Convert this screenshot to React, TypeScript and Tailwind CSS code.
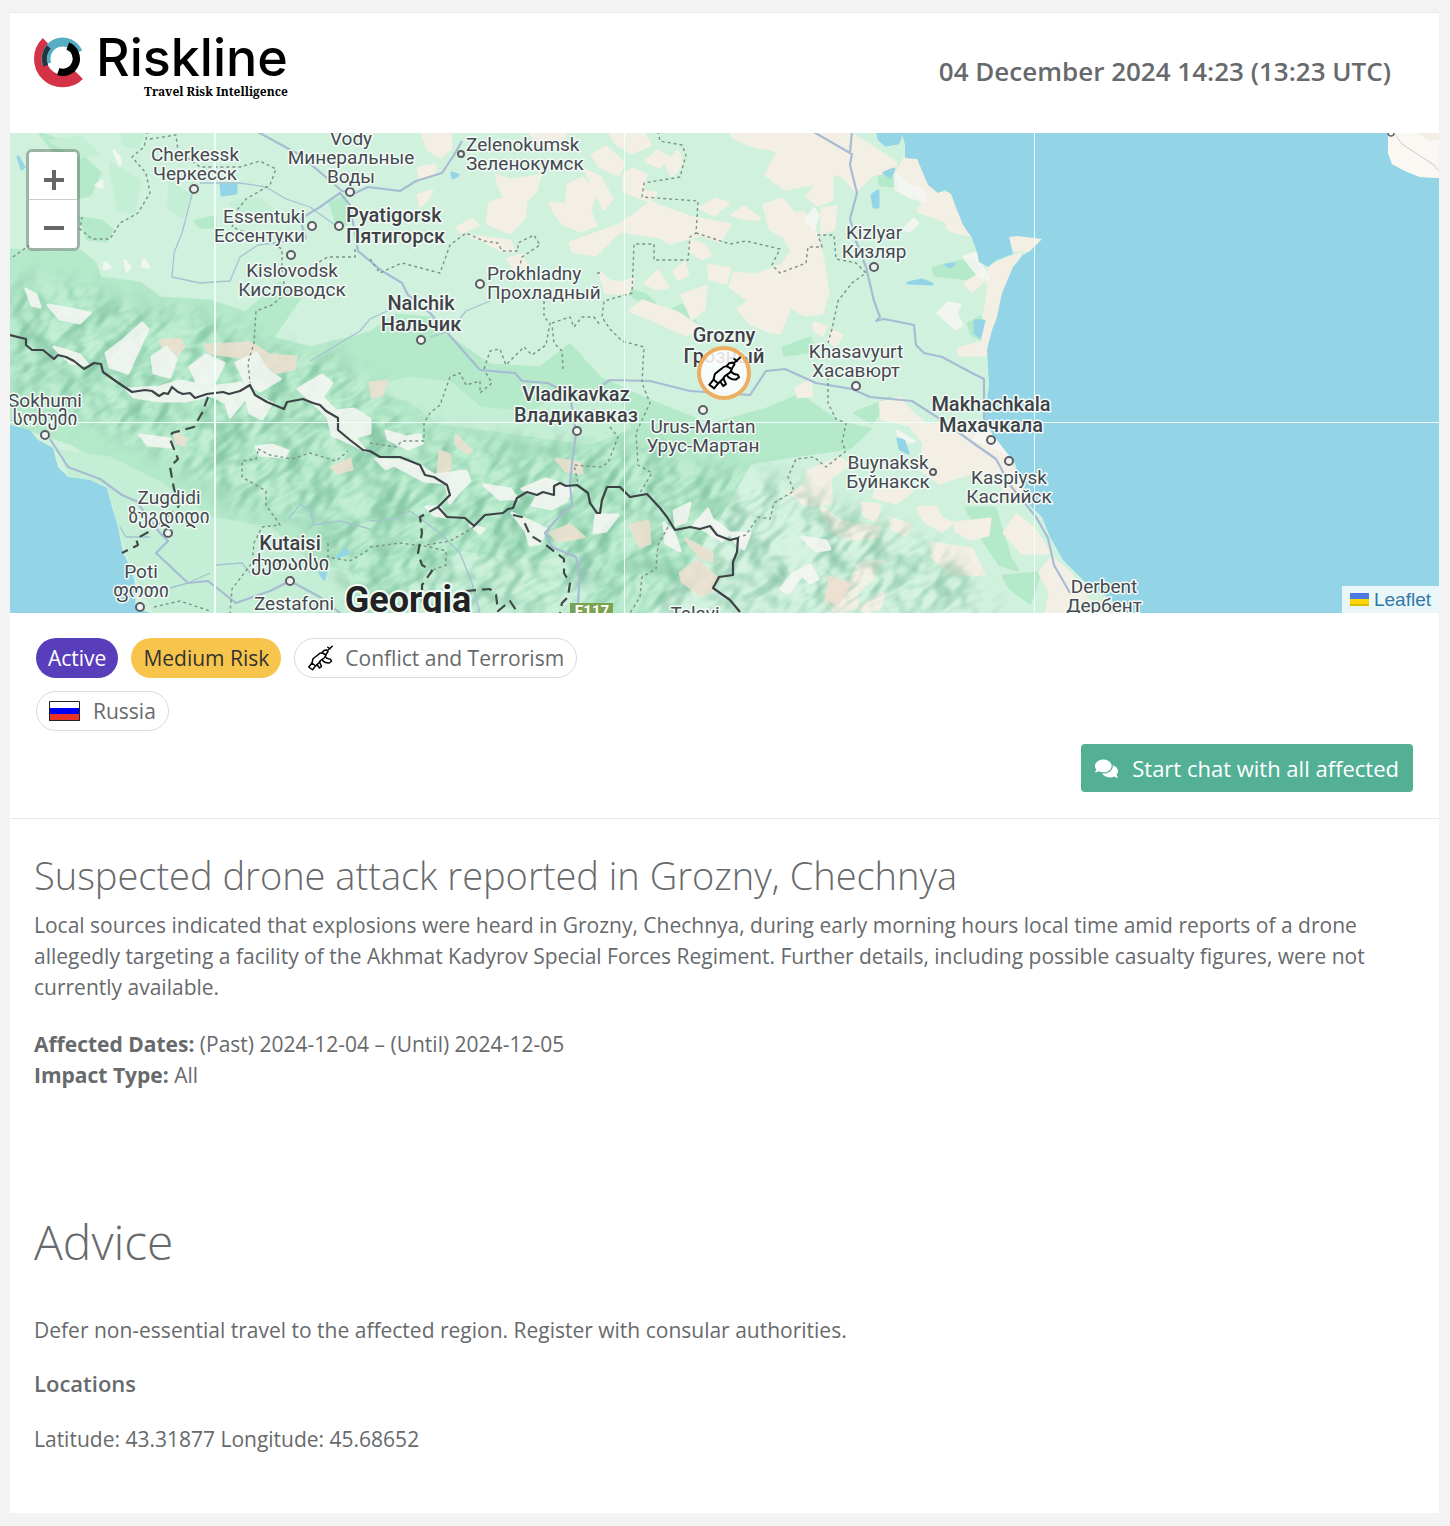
import { FaComments } from 'react-icons/fa';

type Anchor = 'start' | 'middle' | 'end';

interface Place {
  lines: [string, number][];
  x: number;
  anchor?: Anchor;
  major?: boolean;
  dot?: [number, number, number];
}

const places: Place[] = [
  { x: 185, lines: [['Cherkessk', 28], ['Черкесск', 47]], dot: [184, 56, 4] },
  { x: 341, lines: [['Vody', 12], ['Минеральные', 31], ['Воды', 50]], dot: [340, 59, 4] },
  { x: 456, anchor: 'start', lines: [['Zelenokumsk', 18], ['Зеленокумск', 37]], dot: [451, 21, 3] },
  { x: 295, anchor: 'end', lines: [['Essentuki', 90], ['Ессентуки', 109]], dot: [302, 93, 4] },
  { x: 336, anchor: 'start', major: true, lines: [['Pyatigorsk', 89], ['Пятигорск', 110]], dot: [329, 93, 4] },
  { x: 282, lines: [['Kislovodsk', 144], ['Кисловодск', 163]], dot: [281, 122, 4] },
  { x: 477, anchor: 'start', lines: [['Prokhladny', 147], ['Прохладный', 166]], dot: [470, 151, 4] },
  { x: 411, major: true, lines: [['Nalchik', 177], ['Нальчик', 198]], dot: [411, 207, 4] },
  { x: 864, lines: [['Kizlyar', 106], ['Кизляр', 125]], dot: [864, 134, 4] },
  { x: 714, major: true, lines: [['Grozny', 209], ['Грозный', 230]] },
  { x: 846, lines: [['Khasavyurt', 225], ['Хасавюрт', 244]], dot: [846, 253, 4] },
  { x: 35, lines: [['Sokhumi', 274], ['სოხუმი', 292]], dot: [35, 302, 4] },
  { x: 566, major: true, lines: [['Vladikavkaz', 268], ['Владикавказ', 289]], dot: [567, 298, 4] },
  { x: 693, lines: [['Urus-Martan', 300], ['Урус-Мартан', 319]], dot: [693, 277, 4] },
  { x: 981, major: true, lines: [['Makhachkala', 278], ['Махачкала', 299]], dot: [981, 307, 4] },
  { x: 878, lines: [['Buynaksk', 336], ['Буйнакск', 355]], dot: [923, 339, 3] },
  { x: 999, lines: [['Kaspiysk', 351], ['Каспийск', 370]], dot: [999, 328, 4] },
  { x: 159, lines: [['Zugdidi', 371], ['ზუგდიდი', 390]], dot: [158, 400, 4] },
  { x: 131, lines: [['Poti', 445], ['ფოთი', 464]], dot: [130, 474, 4] },
  { x: 280, major: true, lines: [['Kutaisi', 417], ['ქუთაისი', 437]], dot: [280, 448, 4] },
  { x: 284, lines: [['Zestafoni', 477]] },
  { x: 685, lines: [['Telavi', 487]] },
  { x: 1094, lines: [['Derbent', 460], ['Дербент', 479]] },
];

const forests = [
  'M0 117 L45 120 L70 118 L85 130 L90 145 L130 150 L150 165 L200 168 L235 180 L270 150 L290 165 L262 205 L300 215 L360 200 L385 182 L420 185 L440 205 L480 232 L530 235 L560 212 L590 245 L640 268 L700 292 L760 275 L790 262 L830 290 L860 296 L840 315 L790 322 L740 330 L700 400 L640 480 L330 480 L290 420 L240 440 L205 400 L130 350 L60 310 L0 290 Z',
  'M30 0 L60 12 L90 40 L80 62 L60 66 L40 50 L45 20 Z',
  'M70 85 L92 88 L102 97 L96 108 L78 106 Z',
  'M185 88 L205 84 L205 94 L190 94 Z',
  'M320 70 L335 64 L338 90 L328 94 Z',
  'M869 40 L885 35 L886 53 L870 52 Z',
  'M923 135 L960 126 L972 132 L960 146 L925 142 Z',
  'M773 215 L800 205 L805 218 L775 222 Z',
  'M958 191 L970 184 L975 208 L962 202 Z',
  'M956 375 L985 375 L1000 425 L1008 437 L990 432 L975 410 Z',
  'M993 443 L1030 440 L1020 470 L1000 455 Z',
  'M605 152 L636 162 L655 180 L672 172 L686 190 L680 192 L664 182 L652 182 L634 170 Z',
  'M845 280 L870 270 L880 264 L862 290 Z',
];

const lowlands = [
  'M50 318 L100 325 L150 350 L200 385 L260 395 L300 430 L340 440 L340 480 L145 480 L125 440 L110 395 L100 356 L60 342 Z',
  'M360 255 L400 245 L440 250 L470 275 L520 280 L550 262 L610 270 L620 295 L580 310 L520 302 L430 290 L400 268 Z',
  'M400 455 L450 420 L530 430 L570 420 L590 450 L560 480 L400 480 Z',
  'M40 8 L70 4 L88 20 L70 24 Z',
  'M100 30 L130 48 L124 80 L108 76 Z',
  'M160 50 L180 62 L172 84 L158 74 Z',
  'M220 70 L250 66 L262 78 L240 90 Z',
  'M110 0 L134 0 L128 14 L114 12 Z',
];

const fields = [
  'M412 0 L440 0 L441 15 L430 24 L418 16 Z',
  'M408 35 L425 32 L425 42 L410 44 Z',
  'M408 62 L422 58 L416 68 L410 73 Z',
  'M447 95 L462 86 L468 92 L452 100 Z',
  'M486 42 L500 47 L530 43 L526 58 L516 68 L514 85 L500 100 L477 90 L480 70 L495 65 L490 55 Z',
  'M540 70 L556 72 L558 52 L572 45 L586 58 L580 78 L586 92 L570 98 L552 90 L545 80 Z',
  'M576 38 L590 44 L602 66 L594 76 L582 52 Z',
  'M520 0 L556 0 L548 14 L530 12 Z',
  'M582 22 L596 14 L614 30 L608 42 L590 34 Z',
  'M600 0 L634 0 L640 12 L622 20 L606 10 Z',
  'M636 28 L648 18 L658 24 L650 34 Z',
  'M656 30 L668 18 L672 30 L662 44 Z',
  'M614 42 L622 36 L636 42 L632 58 L646 60 L640 68 L614 58 Z',
  'M560 110 L610 92 L640 70 L680 84 L720 92 L710 108 L690 102 L660 110 L650 104 L610 98 L586 122 L562 118 Z',
  'M460 103 L500 108 L504 118 L492 118 L474 108 Z',
  'M498 126 L512 122 L516 132 L504 136 Z',
  'M690 75 L706 66 L718 70 L704 82 Z',
  'M680 108 L694 112 L700 122 L692 126 L680 118 Z',
  'M635 150 L648 138 L658 154 L646 156 Z',
  'M590 140 L600 148 L612 150 L624 146 L618 160 L596 160 Z',
  'M672 162 L696 154 L694 176 L682 186 Z',
  'M698 132 L720 136 L716 150 L700 146 Z',
  'M620 178 L632 168 L668 180 L690 195 L676 202 L636 184 Z',
  'M664 138 L674 130 L678 142 L668 146 Z',
  'M722 0 L840 0 L862 14 L886 30 L884 38 L862 42 L846 58 L834 44 L822 40 L822 66 L808 72 L797 64 L808 50 L775 56 L756 42 L768 18 L740 12 L722 4 Z',
  'M754 72 L772 66 L784 80 L794 80 L806 100 L812 122 L818 160 L812 180 L795 182 L780 174 L770 200 L758 198 L740 190 L728 176 L740 168 L720 154 L724 140 L746 142 L772 132 L782 118 L774 104 L760 96 Z',
  'M812 76 L826 74 L824 96 L812 100 Z',
  'M722 82 L734 74 L750 86 L738 86 Z',
  'M804 190 L816 194 L812 202 L804 198 Z',
  'M823 198 L832 202 L826 212 L818 208 Z',
  'M895 25 L907 26 L913 40 L918 52 L928 60 L941 61 L947 77 L960 102 L950 100 L938 96 L936 88 L908 78 L914 66 L896 50 L886 40 Z',
  'M999 104 L1032 106 L1020 118 L1002 116 Z',
  'M978 134 L1010 121 L1003 134 L992 160 L983 200 L974 212 L972 200 L978 160 Z',
  'M955 150 L968 142 L974 148 L962 158 Z',
  'M948 216 L976 208 L976 222 L950 222 Z',
  'M870 270 L890 265 L900 278 L916 292 L972 290 L985 305 L1000 330 L1012 352 L1018 372 L1000 366 L990 350 L960 340 L930 350 L910 336 L914 310 L900 292 L872 286 Z',
  'M786 255 L800 248 L802 262 L788 264 Z',
  'M798 338 L830 325 L838 332 L820 345 L822 370 L796 372 L780 360 L796 352 Z',
  'M866 352 L902 358 L886 370 L864 364 Z',
  'M812 374 L830 388 L846 392 L870 394 L868 404 L840 406 L820 398 Z',
  'M852 370 L870 372 L866 388 L854 382 Z',
  'M880 385 L900 392 L896 402 L882 396 Z',
  'M908 375 L925 374 L932 386 L942 390 L932 398 L914 388 Z',
  'M945 390 L980 386 L978 402 L960 406 L946 398 Z',
  'M922 410 L962 416 L974 442 L940 440 L922 424 Z',
  'M994 400 L1006 382 L1024 396 L1040 420 L1012 420 Z',
  'M1030 440 L1042 424 L1060 440 L1080 470 L1090 480 L1036 480 L1040 460 Z',
  'M850 430 L872 428 L862 446 L846 460 L848 474 L826 480 L816 468 L824 450 L840 448 Z',
  'M862 466 L874 460 L870 474 L858 480 L850 476 Z',
];

const rocks = [
  'M150 208 L170 206 L174 214 L160 230 L156 218 Z',
  'M195 212 L240 210 L260 222 L286 224 L284 236 L262 240 L244 226 L200 220 Z',
  'M165 300 L176 306 L174 312 L166 310 Z',
  'M322 334 L340 326 L342 336 L328 340 Z',
  'M430 318 L440 322 L440 336 L428 340 Z',
  'M446 302 L462 318 L458 320 L446 312 Z',
  'M546 326 L570 330 L572 340 L556 338 Z',
  'M540 400 L560 392 L574 404 L548 408 Z',
  'M620 392 L638 388 L640 410 L630 414 Z',
  'M670 440 L688 428 L706 444 L702 458 L690 462 L672 448 Z',
  'M676 406 L702 420 L702 428 L690 424 Z',
  'M360 250 L376 248 L372 262 L362 264 Z',
  'M820 444 L840 452 L828 470 L816 466 Z',
];

const snows = [
  'M16 156 L26 162 L30 174 L22 172 Z',
  'M38 172 L60 176 L80 180 L70 190 L50 186 Z',
  'M96 220 L112 208 L132 190 L138 196 L126 222 L118 240 L100 234 Z',
  'M44 214 L70 222 L78 232 L60 230 Z',
  'M142 224 L156 214 L166 226 L160 244 L144 240 Z',
  'M180 234 L196 222 L214 230 L204 250 L188 252 Z',
  'M226 230 L246 220 L258 238 L270 246 L250 258 L236 250 Z',
  'M130 302 L160 306 L162 314 L138 312 Z',
  'M246 314 L262 312 L278 318 L274 324 L250 322 Z',
  'M116 256 L150 254 L170 248 L200 254 L232 250 L244 262 L262 270 L252 286 L240 280 L236 264 L220 284 L216 270 L200 262 L176 268 L150 268 L124 264 Z',
  'M288 256 L312 242 L322 250 L312 264 L326 278 L344 276 L360 286 L360 300 L344 304 L356 318 L340 310 L322 302 L318 284 Z',
  'M376 298 L396 304 L410 302 L412 310 L398 316 L378 306 Z',
  'M366 326 L392 328 L412 334 L424 342 L440 340 L456 338 L460 348 L448 360 L440 370 L436 350 L414 348 L384 332 L376 336 Z',
  'M416 374 L430 374 L436 384 L424 382 Z',
  'M474 352 L500 356 L508 366 L490 366 Z',
  'M512 356 L536 346 L548 350 L562 356 L556 368 L542 376 L522 372 L528 362 Z',
  'M502 380 L520 388 L536 396 L530 410 L520 412 L516 398 Z',
  'M586 382 L608 382 L596 398 L584 400 Z',
  'M664 378 L680 370 L676 388 L666 392 Z',
  'M684 392 L698 376 L702 386 L720 400 L712 408 L696 398 Z',
  'M654 390 L664 400 L670 418 L656 410 Z',
  'M460 392 L474 396 L470 400 Z',
  'M720 400 L740 400 L734 416 L726 410 Z',
  'M792 404 L816 408 L820 416 L806 418 Z',
  'M770 456 L784 440 L800 432 L808 446 L800 450 L792 442 L778 460 Z',
  'M885 42 L902 54 L912 56 L916 68 L900 64 L886 56 Z',
  'M894 96 L904 86 L908 90 L900 98 Z',
  'M954 124 L966 120 L978 146 L968 142 Z',
  'M928 180 L938 170 L950 172 L946 180 L952 192 L946 196 Z',
  'M796 86 L804 76 L808 82 L804 96 Z',
  'M887 298 L900 306 L904 308 L892 310 Z',
  'M970 300 L990 302 L1002 326 L990 316 L964 306 Z',
  'M95 130 L100 134 L94 136 Z',
  'M115 128 L120 134 L117 138 Z',
  'M134 127 L139 134 L132 133 Z',
  'M104 18 L110 26 L110 32 Z',
  'M86 52 L92 48 L92 54 Z',
];

const lakes = [
  'M211 52 L226 52 L226 60 L212 62 Z',
  'M8 24 L14 34 L12 36 Z',
  'M862 62 L868 58 L868 74 L864 74 Z',
  'M868 0 L892 0 L888 10 L876 12 L869 6 Z',
  'M874 40 L884 36 L880 44 Z',
  'M898 150 L912 147 L922 151 Z',
  'M936 132 L944 131 L940 134 Z',
  'M965 188 L974 188 L970 204 L965 200 Z',
  'M888 306 L894 308 L898 320 L890 316 Z',
  'M327 424 L336 416 L338 420 Z',
  'M310 440 L316 438 L314 446 Z',
  'M442 40 L448 42 L443 45 Z',
];

const roads = [
  'M246 -2 L290 22 L332 58 L345 60 L358 54 L390 58 L406 48 L432 40 L444 22 L452 8',
  'M296 106 L290 86 L310 74 L330 60 L340 72 L348 118 L372 138 L392 150 L398 162 L420 180 L470 237',
  'M470 237 L505 240 L512 248 L538 250 L560 262 L566 300 L562 330 L560 350 L562 372 L545 388 L535 400 L542 414 L566 424 L570 440 L568 470',
  'M588 255 L600 247 L640 248 L680 258 L740 262 L756 238 L775 236 L806 250 L842 256 L860 264 L902 268 L930 286 L966 312 L986 326 L1000 352 L1026 384 L1038 405 L1044 432 L1060 460',
  'M802 -2 L840 20 L842 -2 M842 20 L840 32 L847 60 L840 86 L846 108 L856 134 L864 168 L870 184 L866 188 L874 186 L904 192 L906 212 L914 220 L932 224 L962 240 L974 246 L974 290',
  'M40 306 L58 334 L90 346 L112 362 L126 368 L150 400 L158 408 L146 420 L178 450 L198 448 L226 470 L260 458 L280 448 L310 464 L330 480',
];

const minorRoads = [
  'M184 54 L172 100 L164 120 L162 144 L190 150 L220 148 L230 124 L248 112 L296 106',
  'M190 50 L230 50 L256 54 L276 66 L300 74 L325 92',
  'M300 228 L330 210 L350 198 L360 186 L390 172',
  'M420 204 L440 198 L456 178 L480 168',
  'M110 394 L116 404 L140 404 M160 455 L178 450 L200 440',
  'M206 432 L232 430 L240 440 M278 386 L290 372 L300 376 L304 392 L330 388 L360 396',
  'M360 388 L386 386 L400 378 L430 400 L450 420 L462 450 L470 480',
];

const regionLines = [
  'M138 -2 L134 14 L122 24 L136 40 L140 60 L128 80 L110 90 L100 106 L82 106 L70 96 L72 84 M20 112 L0 126',
  'M140 6 L166 2 L168 18 L190 34 L230 34 L250 28 L266 36 L260 52 L236 66 L228 76 L222 94 L262 110 L272 116 L272 140 L276 160 L262 172 L246 178 L244 210 L238 230 L240 250',
  'M345 116 L345 124 L318 124 L300 134',
  'M360 126 L370 140 L392 130 L430 140 L440 112 L456 100 L474 108 L488 110 L492 118 L508 118 L508 110 L524 102 L530 112 L512 124 L508 140',
  'M648 -2 L650 8 L672 12 L676 22 L670 44 L634 50 L632 64 L688 68 L686 100 L680 104 L678 127 L644 127 L644 111 L624 111 L622 160 L594 168 L592 184 L600 196 L612 208 L634 214 L632 250 L640 270 L626 300 L628 332 L642 340 L630 360',
  'M534 168 L534 184 L540 190 L536 212 L522 222 L514 214 L496 232 L490 216 L480 218 L474 236',
  'M542 190 L560 184 L564 194 L572 184 L584 184 L590 192 M553 236 L552 218 L544 210 L542 192',
  'M590 140 L584 140 M686 100 L720 111 L736 108 L770 116 L762 132 L770 140 L796 130 L798 114 L812 114 L808 102 L824 102 L826 126 L846 130 L856 140 L842 150 L828 168 L822 196 L818 210',
  'M818 244 L818 270 L826 286 L836 290 L832 310 L836 318 L816 334 L804 324 L786 326 L778 344 L784 358 L764 370 L760 386 L748 384 L736 402 L728 404',
  'M360 310 L386 314 L392 308 L414 308 L414 290 L420 280 L430 272 L440 244 L450 240 L456 252 L470 248 L470 260 L482 250 L476 240',
  'M600 294 L608 304 L598 330 L590 334 L564 332 L568 350',
  'M658 394 L648 412 L646 436 L632 444 L630 464 L620 480',
  'M248 316 L260 322 L282 326 L300 320 L326 328 L338 318 M248 318 L246 326 L232 328 L232 344 L256 358 L256 372 L270 392 L252 394 L244 410 L242 430 L222 456 L220 480',
  'M360 414 L390 410 L420 414 L436 418 L436 432 L420 438 M464 394 L440 408 L416 412',
  'M318 410 L318 424 L340 428 L360 416',
  'M144 474 L170 468 L200 478',
];

const dashedBorders = [
  'M198 264 L192 280 L184 294 L162 300 L160 306 L168 326 L160 334 L164 356 L170 370 L168 374 L140 398 L126 406 L128 412 L112 420',
  'M428 374 L410 384 L412 400 L408 420 L412 432 L422 438 L412 452 L412 470',
  'M503 382 L512 384 L520 402 L536 412 L554 426 L554 440 L560 450 L558 464 L552 470 L550 480',
  'M456 458 L480 456 L486 462 L488 478 L500 468 L508 480',
];

const stateBorder =
  'M0 202 L16 206 L16 212 L22 217 L33 217 L44 226 L48 222 L56 224 L64 228 L74 236 L84 230 L91 231 L93 239 L107 249 L122 259 L135 257 L142 258 L149 263 L154 260 L158 261 L162 254 L168 259 L173 261 L180 260 L185 265 L197 261 L213 259 L219 261 L230 258 L240 252 L245 262 L257 269 L274 276 L277 269 L293 266 L303 270 L310 272 L316 278 L328 285 L328 297 L340 307 L353 317 L360 318 L370 324 L390 324 L410 332 L415 342 L424 344 L437 352 L440 362 L428 374 L437 384 L455 385 L464 393 L475 382 L493 380 L498 376 L503 375 L507 365 L517 359 L527 362 L533 359 L544 362 L544 353 L550 350 L556 353 L567 352 L578 360 L580 370 L587 380 L590 380 L592 367 L597 354 L610 354 L620 364 L637 361 L650 375 L657 384 L665 397 L680 394 L690 396 L700 393 L707 402 L720 407 L728 405 L727 419 L723 429 L723 442 L709 444 L703 455 L720 467 L730 479';

const caspian =
  'M892 0 L895 12 L895 25 L907 26 L913 40 L918 52 L928 60 L935 57 L941 61 L947 77 L953 92 L962 105 L967 119 L969 129 L978 134 L987 127 L1003 121 L1002 116 L999 104 L1007 103 L1032 106 L1020 118 L1013 122 L1003 134 L992 160 L987 184 L982 197 L977 217 L979 252 L974 287 L983 302 L997 320 L1005 330 L1010 347 L1017 370 L1032 384 L1040 404 L1053 427 L1073 447 L1100 466 L1115 480 L1429 480 L1429 45 L1410 44 L1395 38 L1382 31 L1378 20 L1378 0 Z';

const blackSea =
  'M0 292 L20 297 L28 307 L43 315 L48 334 L58 344 L80 347 L97 355 L102 374 L108 394 L113 420 L122 437 L126 457 L125 474 L140 480 L0 480 Z';

function Shapes({ paths, fill }: { paths: string[]; fill: string }) {
  return (
    <g fill={fill}>
      {paths.map((d) => (
        <path key={d} d={d} stroke={fill} strokeWidth="3" strokeLinejoin="round" />
      ))}
    </g>
  );
}

function Lines({ paths, stroke, width, dash }: { paths: string[]; stroke: string; width: number; dash?: string }) {
  return (
    <g fill="none" stroke={stroke} strokeWidth={width} strokeDasharray={dash} strokeLinejoin="round">
      {paths.map((d) => (
        <path key={d} d={d} />
      ))}
    </g>
  );
}

function RifleIcon({ className }: { className?: string }) {
  return (
    <svg viewBox="48 42 104 104" className={className} fill="none" stroke="#000" strokeWidth="6" strokeLinejoin="round" strokeLinecap="round" aria-hidden="true">
      <path d="M68 114 L55 130 L70 141 L82 126 Z" />
      <path d="M68 114 L72 97 L91 82 Q98 74 108 73 L124 82 L118 93 L102 104 L96 113 L82 126" />
      <path d="M88 120 L98 134 L106 128 L99 112" />
      <path d="M108 100 Q118 115 137 114 L146 107 L142 99 Q129 99 121 89" />
      <path d="M108 73 L116 64 L126 62 L132 68 L124 80" />
      <path d="M130 64 L149 47 M131 51 L140 57" />
    </svg>
  );
}

function Logo() {
  return (
    <a href="#" className="flex text-black" aria-label="Riskline">
      <svg viewBox="102 107 150 156" className="h-[52px] w-[50px] shrink-0" fill="none" aria-hidden="true">
        <circle cx="188" cy="175" r="67" stroke="#d33247" strokeWidth="38" pathLength={360} strokeDasharray="180 180" transform="rotate(45 188 175)" />
        <circle cx="188" cy="175" r="50" stroke="#55aec1" strokeWidth="27" pathLength={360} strokeDasharray="174 186" transform="rotate(162 188 175)" />
        <circle cx="188" cy="175" r="55" stroke="#21383f" strokeWidth="15" pathLength={360} strokeDasharray="63 297" transform="rotate(157 188 175)" />
        <circle cx="188" cy="175" r="41" stroke="#000" strokeWidth="22" pathLength={360} strokeDasharray="176 184" transform="rotate(-68 188 175)" />
      </svg>
      <span className="ml-3 flex flex-col items-end">
        <span className="font-['Inter'] text-[52px] leading-[44px] font-medium">Riskline</span>
        <span className="font-['Noto_Serif','Liberation_Serif',serif] text-[12px] leading-[24px] font-bold">Travel Risk Intelligence</span>
      </span>
    </a>
  );
}

function MapCanvas() {
  return (
    <svg viewBox="0 0 1429 480" preserveAspectRatio="xMinYMin slice" className="absolute inset-0 h-full w-full" role="img" aria-label="Map of the North Caucasus">
      <defs>
        {/* hill shading: slopes facing away from the light become a translucent green */}
        <filter id="relief" x="0" y="0" width="100%" height="100%" colorInterpolationFilters="sRGB">
          <feTurbulence type="fractalNoise" baseFrequency="0.018 0.034" numOctaves="3" seed="7" />
          <feDiffuseLighting surfaceScale="22" lightingColor="#fff" diffuseConstant="1">
            <feDistantLight azimuth="200" elevation="50" />
          </feDiffuseLighting>
          <feColorMatrix values="0 0 0 0 0.42  0 0 0 0 0.7  0 0 0 0 0.57  -1.3 0 0 0 1.05" />
        </filter>
        <filter id="highlight" x="0" y="0" width="100%" height="100%" colorInterpolationFilters="sRGB">
          <feTurbulence type="fractalNoise" baseFrequency="0.018 0.034" numOctaves="3" seed="7" />
          <feDiffuseLighting surfaceScale="22" lightingColor="#fff" diffuseConstant="1">
            <feDistantLight azimuth="200" elevation="50" />
          </feDiffuseLighting>
          <feColorMatrix values="0 0 0 0 0.92  0 0 0 0 0.98  0 0 0 0 0.94  3 0 0 0 -2.4" />
        </filter>
        <filter id="soften">
          <feGaussianBlur stdDeviation="12" />
        </filter>
        <mask id="mountains">
          <path
            d="M0 150 L60 150 L110 170 L200 185 L260 215 L330 225 L400 290 L450 305 L540 310 L620 310 L700 335 L780 345 L840 380 L900 400 L960 440 L990 480 L350 480 L300 390 L220 370 L150 320 L80 290 L0 260 Z"
            fill="#fff"
            filter="url(#soften)"
          />
        </mask>
      </defs>

      <rect width="1429" height="480" fill="#d0f1de" />
      <Shapes paths={forests} fill="#b4e9ca" />
      <Shapes paths={lowlands} fill="#c5eed6" />
      <Shapes paths={fields} fill="#f4efe4" />
      <g mask="url(#mountains)">
        <g transform="rotate(-35 500 300)">
          <rect x="-200" y="-200" width="1400" height="1000" filter="url(#relief)" opacity="0.6" />
          <rect x="-200" y="-200" width="1400" height="1000" filter="url(#highlight)" opacity="0.5" />
        </g>
      </g>
      <g opacity="0.85">
        <Shapes paths={rocks} fill="#efe0d0" />
        <Shapes paths={snows} fill="#f8f7f5" />
      </g>
      <path d={caspian} fill="#93d5e7" />
      <path d={blackSea} fill="#93d5e7" />
      <path d="M1378 0 L1378 20 L1382 31 L1395 38 L1410 44 L1429 45 L1429 0 Z" fill="#fbf8f3" />
      <path d="M1408 0 Q1418 10 1429 7 L1429 0 Z" fill="#f4efe4" />
      <path d="M1384 0 L1392 11 L1424 32 L1429 38" fill="none" stroke="#c3d2cd" strokeWidth="1" />
      <circle cx="1381" cy="0" r="3" fill="#fff" stroke="#666" strokeWidth="1.5" />
      <Shapes paths={lakes} fill="#93d5e7" />

      <Lines paths={minorRoads} stroke="#a5c4d0" width={1.3} />
      <Lines paths={roads} stroke="#a7bbd3" width={2.2} />
      <Lines paths={regionLines} stroke="#7d9288" width={1.4} dash="3 3" />
      <Lines paths={dashedBorders} stroke="#3f4b48" width={2.2} dash="10 6" />
      <Lines paths={[stateBorder]} stroke="#3d4246" width={2.2} />

      <g fill="#effff9">
        <rect x="204" width="2" height="480" />
        <rect x="614" width="1" height="480" />
        <rect x="1024" width="1" height="480" />
        <rect y="289" width="1429" height="1" />
      </g>

      <rect x="560" y="470" width="43" height="14" fill="#7ba352" />
      <text x="582" y="483" textAnchor="middle" className="fill-white font-['Roboto'] text-[15px] font-bold">E117</text>

      {places.map(({ lines, x, anchor = 'middle', major, dot }) => (
        <g key={lines[0][0]}>
          {dot && <circle cx={dot[0]} cy={dot[1]} r={dot[2]} fill="#f3f3f3" stroke="#5b5d63" strokeWidth="2" />}
          {lines.map(([label, y]) => (
            <text
              key={label}
              x={x}
              y={y}
              textAnchor={anchor}
              stroke="#f2fbf6"
              strokeWidth="3"
              strokeLinejoin="round"
              paintOrder="stroke"
              className={
                major
                  ? "fill-[#3f4147] font-['Roboto','DejaVu_Sans',sans-serif] text-[20px] font-medium"
                  : "fill-[#474950] font-['Roboto','DejaVu_Sans',sans-serif] text-[19px]"
              }
            >
              {label}
            </text>
          ))}
        </g>
      ))}
      <text x="398" y="479" textAnchor="middle" stroke="#f2fbf6" strokeWidth="4" strokeLinejoin="round" paintOrder="stroke" className="fill-[#222] font-['Roboto'] text-[36px] font-bold">
        Georgia
      </text>
    </svg>
  );
}

function AlertMap() {
  return (
    <section className="relative h-[480px] overflow-hidden bg-[#93d5e7]">
      <MapCanvas />

      <div className="absolute top-[213px] left-[687px] flex h-[54px] w-[54px] items-center justify-center rounded-full border-4 border-[#eeae62] bg-white/85">
        <RifleIcon className="h-[34px] w-[34px]" />
      </div>

      <div className="absolute top-4 left-4 flex flex-col overflow-hidden rounded-md border-3 border-black/25 bg-clip-padding">
        <button type="button" aria-label="Zoom in" className="flex h-12 w-12 items-center justify-center border-b border-[#ccc] bg-white pt-2 pl-px">
          <svg viewBox="0 0 20 20" className="h-5 w-5" fill="#666" aria-hidden="true">
            <path d="M8 0h4v8h8v4h-8v8H8v-8H0V8h8z" />
          </svg>
        </button>
        <button type="button" aria-label="Zoom out" className="flex h-12 w-12 items-center justify-center bg-white pt-2 pl-px">
          <svg viewBox="0 0 20 20" className="h-5 w-5" fill="#666" aria-hidden="true">
            <path d="M0 8h20v4H0z" />
          </svg>
        </button>
      </div>

      <div className="absolute right-0 bottom-0 flex h-[27px] items-center bg-white/80 px-2">
        <a href="#" className="flex items-center gap-1 font-['Liberation_Sans',sans-serif] text-[19px] leading-[27px] text-[#2f78a8]">
          <svg viewBox="0 0 20 13" className="h-[13px] w-5" aria-hidden="true">
            <path d="M0 0h19v7H0z" fill="#4c7be1" />
            <path d="M0 6h19v6H0z" fill="#ffd500" />
            <path d="M0 11h19v2H0z" fill="#e0bc00" />
          </svg>
          Leaflet
        </a>
      </div>
    </section>
  );
}

function RussiaFlag() {
  return (
    <svg viewBox="0 0 31 20" className="h-5 w-[31px]" aria-hidden="true">
      <path d="M0 0h31v20H0z" fill="#fff" />
      <path d="M0 7h31v7H0z" fill="#0000f5" />
      <path d="M0 13h31v7H0z" fill="#ea3323" />
      <path d="M.5 .5h30v19H.5z" fill="none" stroke="#222" />
    </svg>
  );
}

export default function App() {
  return (
    <div className="min-h-screen bg-[#f3f3f3] pt-3 pr-[11px] pb-[13px] pl-[10px] font-['Open_Sans',sans-serif] text-[21px] leading-[31px] text-[#676a6c]">
      <main className="border-t border-[#e7eaec] bg-white">
        <header className="flex h-[120px] items-start justify-between px-6 pt-[23px]">
          <Logo />
          <time dateTime="2024-12-04T13:23Z" className="mt-5 mr-6 text-[26px] font-semibold">
            04 December 2024 14:23 (13:23 UTC)
          </time>
        </header>

        <AlertMap />

        <section className="border-b border-[#e7eaec] px-[26px] pt-[25px] pb-[26px]">
          <div className="flex flex-wrap gap-[13px]">
            <span className="flex h-10 items-center rounded-full bg-[#593ebc] px-3 text-white">Active</span>
            <span className="flex h-10 items-center rounded-full bg-[#f7c54c] px-3 text-[#333]">Medium Risk</span>
            <span className="flex h-10 items-center gap-3 rounded-full border border-[#d5dbde] px-3">
              <RifleIcon className="h-[26px] w-[26px]" />
              Conflict and Terrorism
            </span>
          </div>
          <div className="mt-[13px] flex">
            <span className="flex h-10 items-center gap-[13px] rounded-full border border-[#d5dbde] px-3">
              <RussiaFlag />
              Russia
            </span>
          </div>
          <div className="mt-[13px] flex justify-end">
            <button type="button" className="flex h-12 items-center gap-[14px] rounded bg-[#54b095] px-[14px] text-[22px] text-white">
              <FaComments className="h-[23px] w-[23px]" />
              Start chat with all affected
            </button>
          </div>
        </section>

        <article className="px-6 pt-[31px] pb-[58px]">
          <h1 className="text-[38px] leading-[50px] font-light">Suspected drone attack reported in Grozny, Chechnya</h1>
          <p className="mt-[10px]">
            Local sources indicated that explosions were heard in Grozny, Chechnya, during early morning hours local time amid
            reports of a drone allegedly targeting a facility of the Akhmat Kadyrov Special Forces Regiment. Further details,
            including possible casualty figures, were not currently available.
          </p>
          <p className="mt-[26px]">
            <strong>Affected Dates:</strong> (Past) 2024-12-04 – (Until) 2024-12-05
            <br />
            <strong>Impact Type:</strong> All
          </p>

          <h2 className="mt-[121px] text-[48px] leading-[60px] font-light">Advice</h2>
          <p className="mt-[43px]">Defer non-essential travel to the affected region. Register with consular authorities.</p>
          <h3 className="mt-[22px] text-[22px] font-semibold">Locations</h3>
          <p className="mt-[25px]">Latitude: 43.31877 Longitude: 45.68652</p>
        </article>
      </main>
    </div>
  );
}
